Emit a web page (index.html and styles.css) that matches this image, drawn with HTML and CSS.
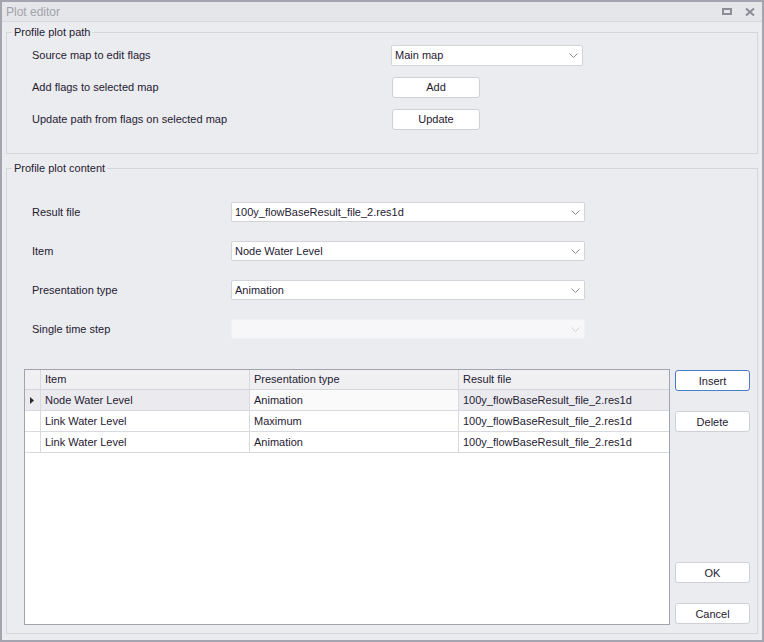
FILE: index.html
```html
<!DOCTYPE html>
<html lang="en">
<head>
<meta charset="utf-8">
<title>Plot editor</title>
<link rel="stylesheet" href="styles.css">
</head>
<body>
<div class="window">
  <div class="titlebar">
    <span class="title">Plot editor</span>
    <div class="title-buttons">
      <svg class="tb-icon" width="10" height="7" viewBox="0 0 10 7"><rect x="1" y="1" width="8" height="5" fill="none" stroke="#8b8c95" stroke-width="2"/></svg>
      <svg class="tb-icon" width="10" height="8" viewBox="0 0 10 8"><path d="M1 0.5 L9 7.5 M9 0.5 L1 7.5" stroke="#8b8c95" stroke-width="2"/></svg>
    </div>
  </div>

  <fieldset class="group group-path">
    <legend>Profile plot path</legend>
    <div class="form path-form">
      <label class="field-label">Source map to edit flags</label>
      <div class="combo path-combo">
        <span class="combo-text">Main map</span>
        <svg class="chevron" width="9" height="5" viewBox="0 0 9 5"><polyline points="0.5,0.5 4.5,4.5 8.5,0.5" fill="none" stroke="#85868f"/></svg>
      </div>
      <label class="field-label">Add flags to selected map</label>
      <button class="btn path-btn">Add</button>
      <label class="field-label">Update path from flags on selected map</label>
      <button class="btn path-btn">Update</button>
    </div>
  </fieldset>

  <fieldset class="group group-content">
    <legend>Profile plot content</legend>
    <div class="form content-form">
      <label class="field-label">Result file</label>
      <div class="combo">
        <span class="combo-text">100y_flowBaseResult_file_2.res1d</span>
        <svg class="chevron" width="9" height="5" viewBox="0 0 9 5"><polyline points="0.5,0.5 4.5,4.5 8.5,0.5" fill="none" stroke="#85868f"/></svg>
      </div>
      <label class="field-label">Item</label>
      <div class="combo">
        <span class="combo-text">Node Water Level</span>
        <svg class="chevron" width="9" height="5" viewBox="0 0 9 5"><polyline points="0.5,0.5 4.5,4.5 8.5,0.5" fill="none" stroke="#85868f"/></svg>
      </div>
      <label class="field-label">Presentation type</label>
      <div class="combo">
        <span class="combo-text">Animation</span>
        <svg class="chevron" width="9" height="5" viewBox="0 0 9 5"><polyline points="0.5,0.5 4.5,4.5 8.5,0.5" fill="none" stroke="#85868f"/></svg>
      </div>
      <label class="field-label">Single time step</label>
      <div class="combo combo-disabled">
        <span class="combo-text"></span>
        <svg class="chevron" width="9" height="5" viewBox="0 0 9 5"><polyline points="0.5,0.5 4.5,4.5 8.5,0.5" fill="none" stroke="#cfd0d5"/></svg>
      </div>
    </div>

    <div class="lower">
      <div class="grid">
        <div class="grid-row grid-header">
          <div class="cell indicator"></div>
          <div class="cell">Item</div>
          <div class="cell">Presentation type</div>
          <div class="cell">Result file</div>
        </div>
        <div class="grid-row focused">
          <div class="cell indicator"><svg width="4" height="7" viewBox="0 0 4 7"><polygon points="0,0 4,3.5 0,7" fill="#2a2b35"/></svg></div>
          <div class="cell">Node Water Level</div>
          <div class="cell focused-cell">Animation</div>
          <div class="cell">100y_flowBaseResult_file_2.res1d</div>
        </div>
        <div class="grid-row">
          <div class="cell indicator"></div>
          <div class="cell">Link Water Level</div>
          <div class="cell">Maximum</div>
          <div class="cell">100y_flowBaseResult_file_2.res1d</div>
        </div>
        <div class="grid-row">
          <div class="cell indicator"></div>
          <div class="cell">Link Water Level</div>
          <div class="cell">Animation</div>
          <div class="cell">100y_flowBaseResult_file_2.res1d</div>
        </div>
      </div>
      <div class="side-buttons">
        <button class="btn btn-focus">Insert</button>
        <button class="btn">Delete</button>
        <div class="spacer"></div>
        <button class="btn">OK</button>
        <button class="btn">Cancel</button>
      </div>
    </div>
  </fieldset>
</div>
</body>
</html>
```

FILE: styles.css
```css
* {
  box-sizing: border-box;
}

body {
  margin: 0;
  font-family: "Liberation Sans", Arial, sans-serif;
  font-size: 11px;
  color: #1f2031;
  background: #ebecf0;
}

.window {
  width: 764px;
  height: 642px;
  border: 2px solid #a3a4af;
  background: #ebecf0;
  display: flex;
  flex-direction: column;
}

/* title bar */
.titlebar {
  height: 20px;
  flex: none;
  background: #e5e6ea;
  border-bottom: 1px solid #d8d9df;
  display: flex;
  align-items: center;
  justify-content: space-between;
  padding: 0 7px 0 4px;
}

.title {
  font-size: 12px;
  color: #a2a3ab;
}

.title-buttons {
  display: flex;
  align-items: center;
  gap: 13px;
}

.tb-icon {
  display: block;
}

/* group boxes */
.group {
  margin: 3px 4px 0;
  border: 1px solid #d5d6dc;
  padding: 6px 7px 24px 5px;
  min-width: 0;
  flex: none;
}

.group legend {
  padding: 0 2px;
  line-height: 14px;
  font-size: 11px;
  color: #1f2031;
}

.group-content {
  margin-top: 7px;
  margin-bottom: 6px;
  padding: 27px 7px 8px 5px;
  flex: 1;
  display: flex;
  flex-direction: column;
}

/* label + control forms */
.form {
  display: grid;
  grid-auto-rows: 20px;
  align-items: center;
  margin-left: 20px;
}

.path-form {
  grid-template-columns: 359px 192px;
  row-gap: 12px;
}

.content-form {
  grid-template-columns: 199px 354px;
  row-gap: 19px;
  flex: none;
}

.field-label {
  line-height: 20px;
  white-space: nowrap;
}

.combo {
  height: 20px;
  background: #ffffff;
  border: 1px solid #d3d4da;
  border-radius: 2px;
  display: flex;
  align-items: center;
  padding: 0 4px 0 3px;
}

.path-combo {
  height: 21px;
}

.combo-text {
  flex: 1;
  white-space: nowrap;
  overflow: hidden;
}

.chevron {
  display: block;
  flex: none;
}

.combo-disabled {
  background: #f7f7f9;
  border-color: #f1f1f4;
}

/* buttons */
.btn {
  height: 21px;
  padding: 0;
  font-family: inherit;
  font-size: 11px;
  color: #1f2031;
  background: #ffffff;
  border: 1px solid #cfd0d7;
  border-radius: 3px;
}

.path-btn {
  width: 88px;
  margin-left: 1px;
  justify-self: start;
}

.btn-focus {
  border-color: #4a7ccc;
}

/* lower area: table + side buttons */
.lower {
  flex: 1;
  display: flex;
  gap: 5px;
  margin: 30px 0 0 12px;
  min-height: 0;
}

.grid {
  width: 646px;
  flex: none;
  background: #ffffff;
  border: 1px solid #a2a3ae;
}

.grid-row {
  display: grid;
  grid-template-columns: 16px 209px 209px 1fr;
  height: 21px;
}

.cell {
  border-right: 1px solid #d9dae0;
  border-bottom: 1px solid #d9dae0;
  padding-left: 4px;
  line-height: 20px;
  white-space: nowrap;
  overflow: hidden;
}

.cell:last-child {
  border-right: none;
}

.grid-header {
  height: 20px;
  background: #f0f0f3;
}

.grid-header .cell {
  line-height: 19px;
  border-bottom-color: #d4d5db;
}

.focused .cell {
  background: #ebebef;
}

.focused .focused-cell {
  background: #fafafb;
}

.indicator {
  padding-left: 5px;
  display: flex;
  align-items: center;
}

.indicator svg {
  display: block;
}

.side-buttons {
  width: 75px;
  flex: none;
  display: flex;
  flex-direction: column;
  gap: 20px;
  padding: 1px 0 1px;
}

.spacer {
  flex: 1;
}
```
